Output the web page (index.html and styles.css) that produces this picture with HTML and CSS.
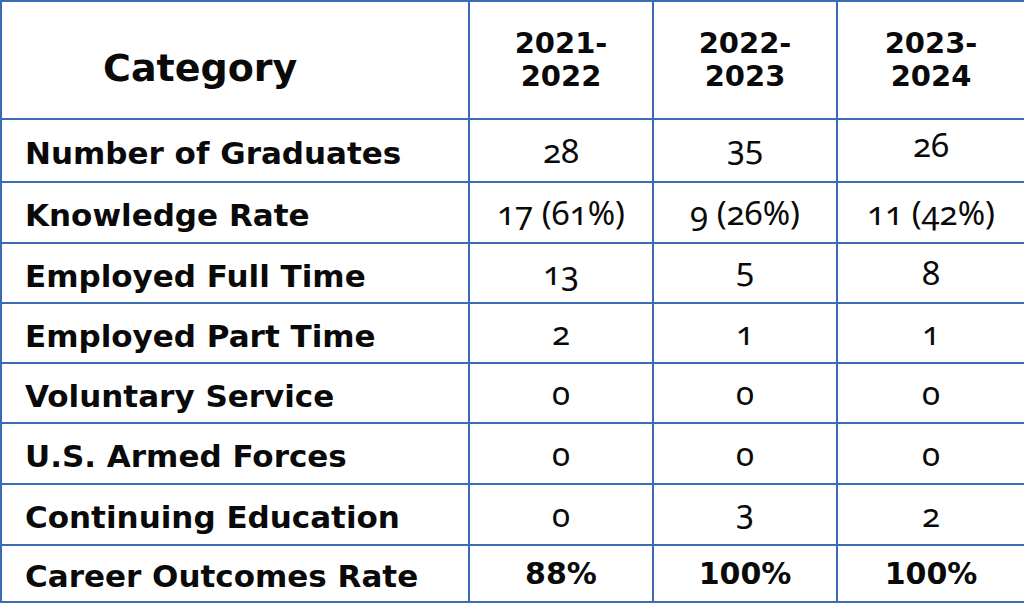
FILE: index.html
```html
<!DOCTYPE html>
<html>
<head>
<meta charset="utf-8">
<link rel="stylesheet" href="styles.css">
</head>
<body>
<table class="outcomes">
  <colgroup>
    <col class="c-cat"><col class="c-yr"><col class="c-yr"><col class="c-yr-last">
  </colgroup>
  <thead>
    <tr class="head">
      <th class="cat-head">Category</th>
      <th class="yr">2021-<br>2022</th>
      <th class="yr">2022-<br>2023</th>
      <th class="yr">2023-<br>2024</th>
    </tr>
  </thead>
  <tbody>
    <tr class="r1"><td class="label">Number of Graduates</td><td>28</td><td><span class="lift">35</span></td><td><span class="up">26</span></td></tr>
    <tr class="r2"><td class="label">Knowledge Rate</td><td>17 (61%)</td><td>9 (26%)</td><td>11 (42%)</td></tr>
    <tr class="r3"><td class="label">Employed Full Time</td><td>13</td><td><span class="lift">5</span></td><td>8</td></tr>
    <tr class="r4"><td class="label">Employed Part Time</td><td>2</td><td>1</td><td>1</td></tr>
    <tr class="r5"><td class="label">Voluntary Service</td><td>0</td><td>0</td><td>0</td></tr>
    <tr class="r6"><td class="label">U.S. Armed Forces</td><td>0</td><td>0</td><td>0</td></tr>
    <tr class="r7"><td class="label">Continuing Education</td><td>0</td><td><span class="lift">3</span></td><td>2</td></tr>
    <tr class="r8"><td class="label">Career Outcomes Rate</td><td class="strong">88%</td><td class="strong">100%</td><td class="strong">100%</td></tr>
  </tbody>
</table>
</body>
</html>
```

FILE: styles.css
```css
html, body {
  margin: 0;
  padding: 0;
  background: #ffffff;
}
body {
  width: 1024px;
  height: 604px;
  overflow: hidden;
}
.outcomes {
  width: 1024px;
  border-collapse: collapse;
  table-layout: fixed;
  font-family: "DejaVu Sans", sans-serif;
  color: #0a0a0a;
}
.c-cat { width: 468px; }
.c-yr { width: 184px; }
.c-yr-last { width: 188px; }
.outcomes th, .outcomes td {
  border: 2px solid #3d6cb5;
  padding: 0;
  text-align: center;
  vertical-align: middle;
}
.outcomes .yr { height: 116px; }
.outcomes .cat-head {
  height: 100px;
  font-size: 38px;
  font-weight: 700;
  text-align: left;
  padding-left: 101px;
  padding-top: 16px;
}
.yr {
  font-size: 29px;
  font-weight: 700;
  line-height: 33px;
}
.outcomes tbody td {
  line-height: 36px;
  font-family: "Noto Sans", "Open Sans", sans-serif;
  font-variant-numeric: oldstyle-nums;
  font-size: 33px;
  font-weight: 400;
}
.r1 { height: 63px; }
.r2 { height: 61px; }
.r3, .r4, .r5 { height: 60px; }
.r6, .r7 { height: 61px; }
.r8 { height: 57px; }
.outcomes td.label {
  text-align: left;
  padding-left: 23px;
  padding-top: 5px;
  font-family: "DejaVu Sans", sans-serif;
  font-variant-numeric: normal;
  font-size: 31px;
  font-weight: 700;
}
.outcomes td.strong {
  font-family: "DejaVu Sans", sans-serif;
  font-variant-numeric: normal;
  font-weight: 700;
  font-size: 30px;
}
.up {
  display: inline-block;
  transform: translateY(-6px);
}
.lift {
  display: inline-block;
  transform: translateY(-4px);
}
```
